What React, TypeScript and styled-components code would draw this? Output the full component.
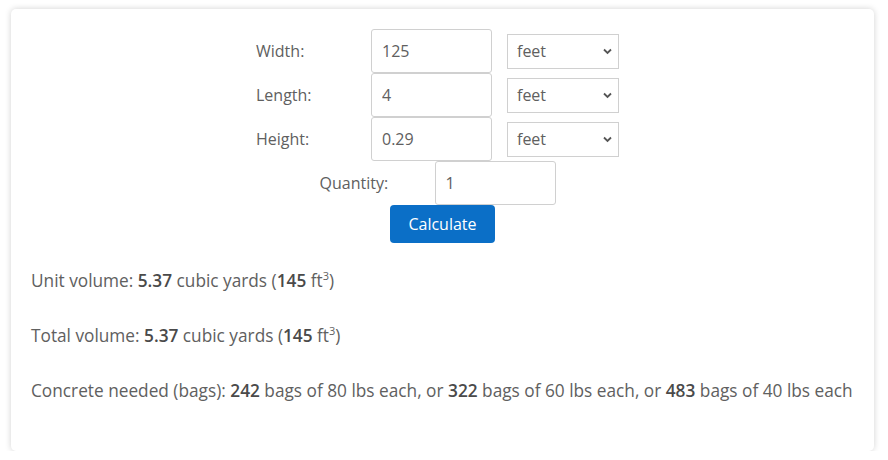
import React from "react";
import styled, { createGlobalStyle } from "styled-components";

const Global = createGlobalStyle`
  html, body { margin: 0; padding: 0; background: #ffffff; }
  body { font-family: "Open Sans", "Lato", sans-serif; color: #606060; }
  * { box-sizing: border-box; }
`;

const Card = styled.div`
  margin: 9px 14px 0 11px;
  width: 863px;
  height: 442px;
  background: #fff;
  border-radius: 5px;
  box-shadow: 0 0 6px rgba(0, 0, 0, 0.18);
  padding: 20px 20px 0 20px;
  display: flex;
  flex-direction: column;
`;

const Form = styled.div`
  display: flex;
  flex-direction: column;
  align-items: center;
`;

const DimGrid = styled.div`
  display: grid;
  grid-template-columns: 100px 121px 112px;
  column-gap: 15px;
  margin-left: -10px;
`;

const Label = styled.label`
  display: flex;
  align-items: center;
  font-size: 16px;
  color: #606060;
`;

const TextInput = styled.input`
  width: 121px;
  height: 44px;
  border: 1px solid #d0d0d0;
  border-radius: 3px;
  padding: 0 10px;
  font-family: inherit;
  font-size: 16px;
  color: #606060;
  background: #fff;
  outline: none;
`;

const SelectWrap = styled.div`
  position: relative;
  display: flex;
  align-items: center;
`;

const Select = styled.select`
  appearance: none;
  width: 112px;
  height: 35px;
  border: 1px solid #d0d0d0;
  border-radius: 0;
  padding: 0 9px;
  font-family: inherit;
  font-size: 16px;
  color: #606060;
  background: #fff;
  outline: none;
`;

const Chevron = styled.svg`
  position: absolute;
  right: 7px;
  top: 50%;
  margin-top: -3px;
  pointer-events: none;
`;

const QtyRow = styled.div`
  display: flex;
  align-items: center;
  margin-left: -10px;
`;

const QtyLabel = styled(Label)`
  width: 115px;
`;

const Button = styled.button`
  width: 105px;
  height: 38px;
  border: none;
  border-radius: 4px;
  background: #0b6fc7;
  color: #fff;
  font-family: inherit;
  font-size: 16px;
`;

const Results = styled.div`
  margin-top: 26px;
  display: flex;
  flex-direction: column;
  gap: 31px;
`;

const Line = styled.p`
  margin: 0;
  font-size: 17.25px;
  line-height: 24px;
  color: #606060;
  white-space: nowrap;
`;

const B = styled.b`
  font-weight: 600;
  color: #4a4a4a;
`;

const Sup = styled.sup`
  font-size: 11px;
  line-height: 0;
`;

const units = ["Width", "Length", "Height"];
const values = ["125", "4", "0.29"];

function UnitSelect() {
  return (
    <SelectWrap>
      <Select defaultValue="feet">
        <option value="feet">feet</option>
        <option value="inches">inches</option>
        <option value="yards">yards</option>
        <option value="meters">meters</option>
      </Select>
      <Chevron width="9" height="7" viewBox="0 0 9 7">
        <path d="M1 1.5 L4.5 5 L8 1.5" fill="none" stroke="#555" strokeWidth="1.8" />
      </Chevron>
    </SelectWrap>
  );
}

export default function App() {
  return (
    <>
      <Global />
      <Card>
        <Form>
          <DimGrid>
            {units.map((u, i) => (
              <React.Fragment key={u}>
                <Label>{u}:</Label>
                <TextInput defaultValue={values[i]} />
                <UnitSelect />
              </React.Fragment>
            ))}
          </DimGrid>
          <QtyRow>
            <QtyLabel>Quantity:</QtyLabel>
            <TextInput defaultValue="1" />
          </QtyRow>
          <Button>Calculate</Button>
        </Form>
        <Results>
          <Line>
            Unit volume: <B>5.37</B> cubic yards (<B>145</B> ft<Sup>3</Sup>)
          </Line>
          <Line>
            Total volume: <B>5.37</B> cubic yards (<B>145</B> ft<Sup>3</Sup>)
          </Line>
          <Line>
            Concrete needed (bags): <B>242</B> bags of 80 lbs each, or <B>322</B> bags of 60 lbs each, or{" "}
            <B>483</B> bags of 40 lbs each
          </Line>
        </Results>
      </Card>
    </>
  );
}
